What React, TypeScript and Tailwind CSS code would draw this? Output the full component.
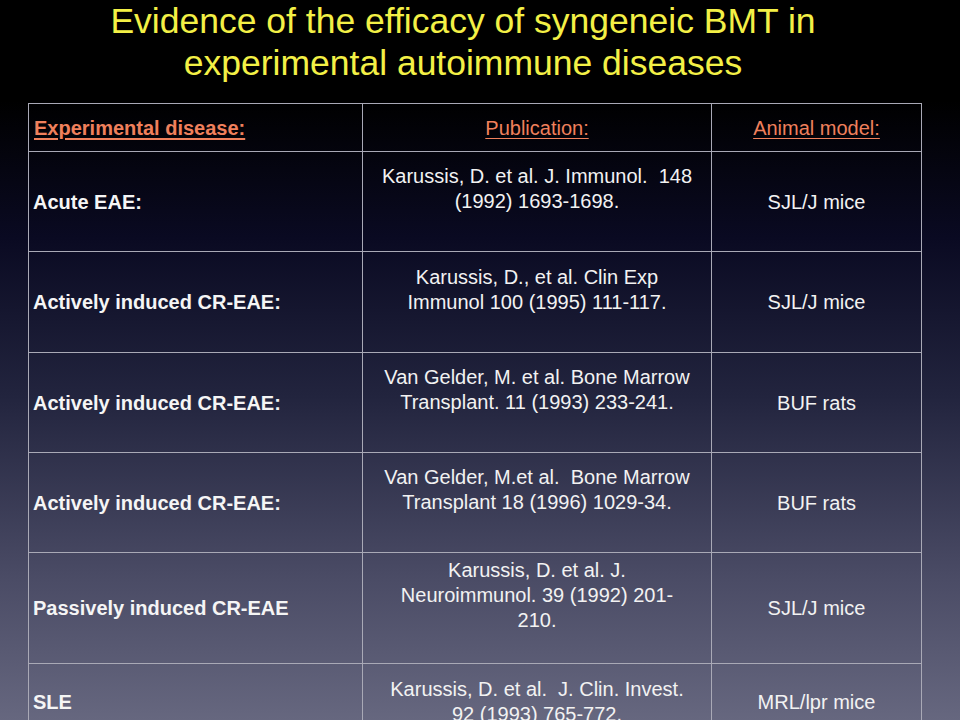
import React from "react";

type Row = { disease: string; pub: string[]; animal: string; h: string; blank: boolean };

const rows: Row[] = [
  { disease: "Acute EAE:", pub: ["Karussis, D. et al. J. Immunol.\u00a0 148", "(1992) 1693-1698."], animal: "SJL/J mice", h: "h-[100px]", blank: true },
  { disease: "Actively induced CR-EAE:", pub: ["Karussis, D., et al. Clin Exp", "Immunol 100 (1995) 111-117."], animal: "SJL/J mice", h: "h-[101px]", blank: true },
  { disease: "Actively induced CR-EAE:", pub: ["Van Gelder, M. et al. Bone Marrow", "Transplant. 11 (1993) 233-241."], animal: "BUF rats", h: "h-[100px]", blank: true },
  { disease: "Actively induced CR-EAE:", pub: ["Van Gelder, M.et al.\u00a0 Bone Marrow", "Transplant 18 (1996) 1029-34."], animal: "BUF rats", h: "h-[100px]", blank: true },
  { disease: "Passively induced CR-EAE", pub: ["Karussis, D. et al. J.", "Neuroimmunol. 39 (1992) 201-", "210."], animal: "SJL/J mice", h: "h-[111px]", blank: true },
  { disease: "SLE", pub: ["Karussis, D. et al.\u00a0 J. Clin. Invest.", "92 (1993) 765-772."], animal: "MRL/lpr mice", h: "h-[76px]", blank: false },
];

export default function App() {
  return (
    <div
      className="w-[960px] h-[720px] overflow-hidden bg-[linear-gradient(180deg,#000000_0%,#000000_14%,#0a0a22_33%,#22243e_55%,#4a4b65_80%,#66677f_100%)]"
      style={{ fontFamily: '"Liberation Sans", Arial, sans-serif' }}
    >
      <div className="pr-[34px] text-center text-[35.5px] leading-[42px] text-[#f3f046]">
        <div>Evidence of the efficacy of syngeneic BMT in</div>
        <div>experimental autoimmune diseases</div>
      </div>
      <div className="mt-[19px] ml-[28px] w-[894px] border-l border-t border-[#a9a9b6] grid grid-cols-[334px_349px_210px]">
        <div className="h-[48px] border-r border-b border-[#a9a9b6] flex items-center pl-[5px] text-[20px] font-bold text-[#f0805c] underline underline-offset-[3px] decoration-[2px]">
          Experimental disease:
        </div>
        <div className="h-[48px] border-r border-b border-[#a9a9b6] flex items-center justify-center text-[20px] text-[#f0805c] underline underline-offset-[3px] decoration-[1px]">
          Publication:
        </div>
        <div className="h-[48px] border-r border-b border-[#a9a9b6] flex items-center justify-center text-[20px] text-[#f0805c] underline underline-offset-[3px] decoration-[1px]">
          Animal model:
        </div>
        {rows.map((r, i) => (
          <React.Fragment key={i}>
            <div className={`${r.h} border-r border-b border-[#a9a9b6] flex items-center pl-[4px] text-[20px] font-bold text-[#f5f5f5]`}>
              {r.disease}
            </div>
            <div className={`${r.h} border-r border-b border-[#a9a9b6] flex flex-col items-center justify-center text-center text-[20px] leading-[25px] text-[#f2f2f2] ${r.blank ? "pb-[25px]" : ""}`}>
              {r.pub.map((l, j) => (
                <div key={j} className="whitespace-nowrap">{l}</div>
              ))}
            </div>
            <div className={`${r.h} border-r border-b border-[#a9a9b6] flex items-center justify-center text-[20px] text-[#f2f2f2]`}>
              {r.animal}
            </div>
          </React.Fragment>
        ))}
      </div>
    </div>
  );
}
